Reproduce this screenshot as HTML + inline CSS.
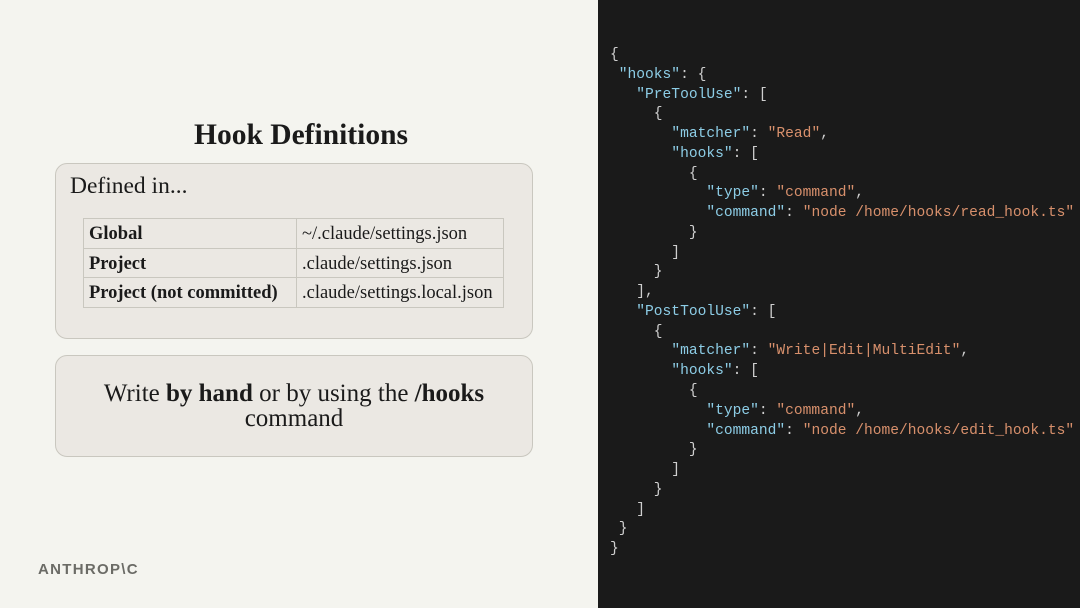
<!DOCTYPE html>
<html><head><meta charset="utf-8"><style>
*{margin:0;padding:0;box-sizing:border-box}
body{width:1080px;height:608px;overflow:hidden;background:#f4f4ef;position:relative;font-family:"Liberation Serif",serif;color:#1a1a1a}
.title{position:absolute;left:55px;width:492px;top:119px;text-align:center;font-weight:bold;font-size:29.5px}
.box{position:absolute;left:55px;width:478px;background:#ebe8e3;border:1.5px solid #c9c7bf;border-radius:12px}
.b1{top:163px;height:176px}
.b2{top:355px;height:102px}
.def{position:absolute;left:14px;top:9px;font-size:23.5px}
table{position:absolute;left:27px;top:54px;border-collapse:collapse;font-size:18.5px;background:#ebe8e3}
td{border:1.5px solid #c9c7bf;height:29.5px;padding:3px 5px 0;white-space:nowrap}
td.k{font-weight:bold;width:213px}
td.v{width:207px}
.b2 p{position:absolute;left:0;right:0;top:25px;text-align:center;font-size:25px;line-height:25px}
.logo{position:absolute;left:38px;top:561px;font-family:"Liberation Sans",sans-serif;font-weight:bold;font-size:15px;color:#6b6b66;letter-spacing:1.3px}
.code{position:absolute;left:598px;top:0;width:482px;height:608px;background:#1a1a1a}
pre{position:absolute;left:610px;top:46px;font-family:"Liberation Mono",monospace;font-size:14.6px;line-height:19.76px;color:#cfcfcf}
.k2{color:#8dcde6}.s{color:#d8906c}
</style></head><body>
<div class="title">Hook Definitions</div>
<div class="box b1"><div class="def">Defined in...</div>
<table>
<tr><td class="k">Global</td><td class="v">~/.claude/settings.json</td></tr>
<tr><td class="k">Project</td><td class="v">.claude/settings.json</td></tr>
<tr><td class="k">Project (not committed)</td><td class="v">.claude/settings.local.json</td></tr>
</table></div>
<div class="box b2"><p>Write <b>by hand</b> or by using the <b>/hooks</b><br>command</p></div>
<div class="logo">ANTHROP\C</div>
<div class="code"></div>
<pre>{
 <span class="k2">"hooks"</span>: {
   <span class="k2">"PreToolUse"</span>: [
     {
       <span class="k2">"matcher"</span>: <span class="s">"Read"</span>,
       <span class="k2">"hooks"</span>: [
         {
           <span class="k2">"type"</span>: <span class="s">"command"</span>,
           <span class="k2">"command"</span>: <span class="s">"node /home/hooks/read_hook.ts"</span>
         }
       ]
     }
   ],
   <span class="k2">"PostToolUse"</span>: [
     {
       <span class="k2">"matcher"</span>: <span class="s">"Write|Edit|MultiEdit"</span>,
       <span class="k2">"hooks"</span>: [
         {
           <span class="k2">"type"</span>: <span class="s">"command"</span>,
           <span class="k2">"command"</span>: <span class="s">"node /home/hooks/edit_hook.ts"</span>
         }
       ]
     }
   ]
 }
}</pre>
</body></html>
